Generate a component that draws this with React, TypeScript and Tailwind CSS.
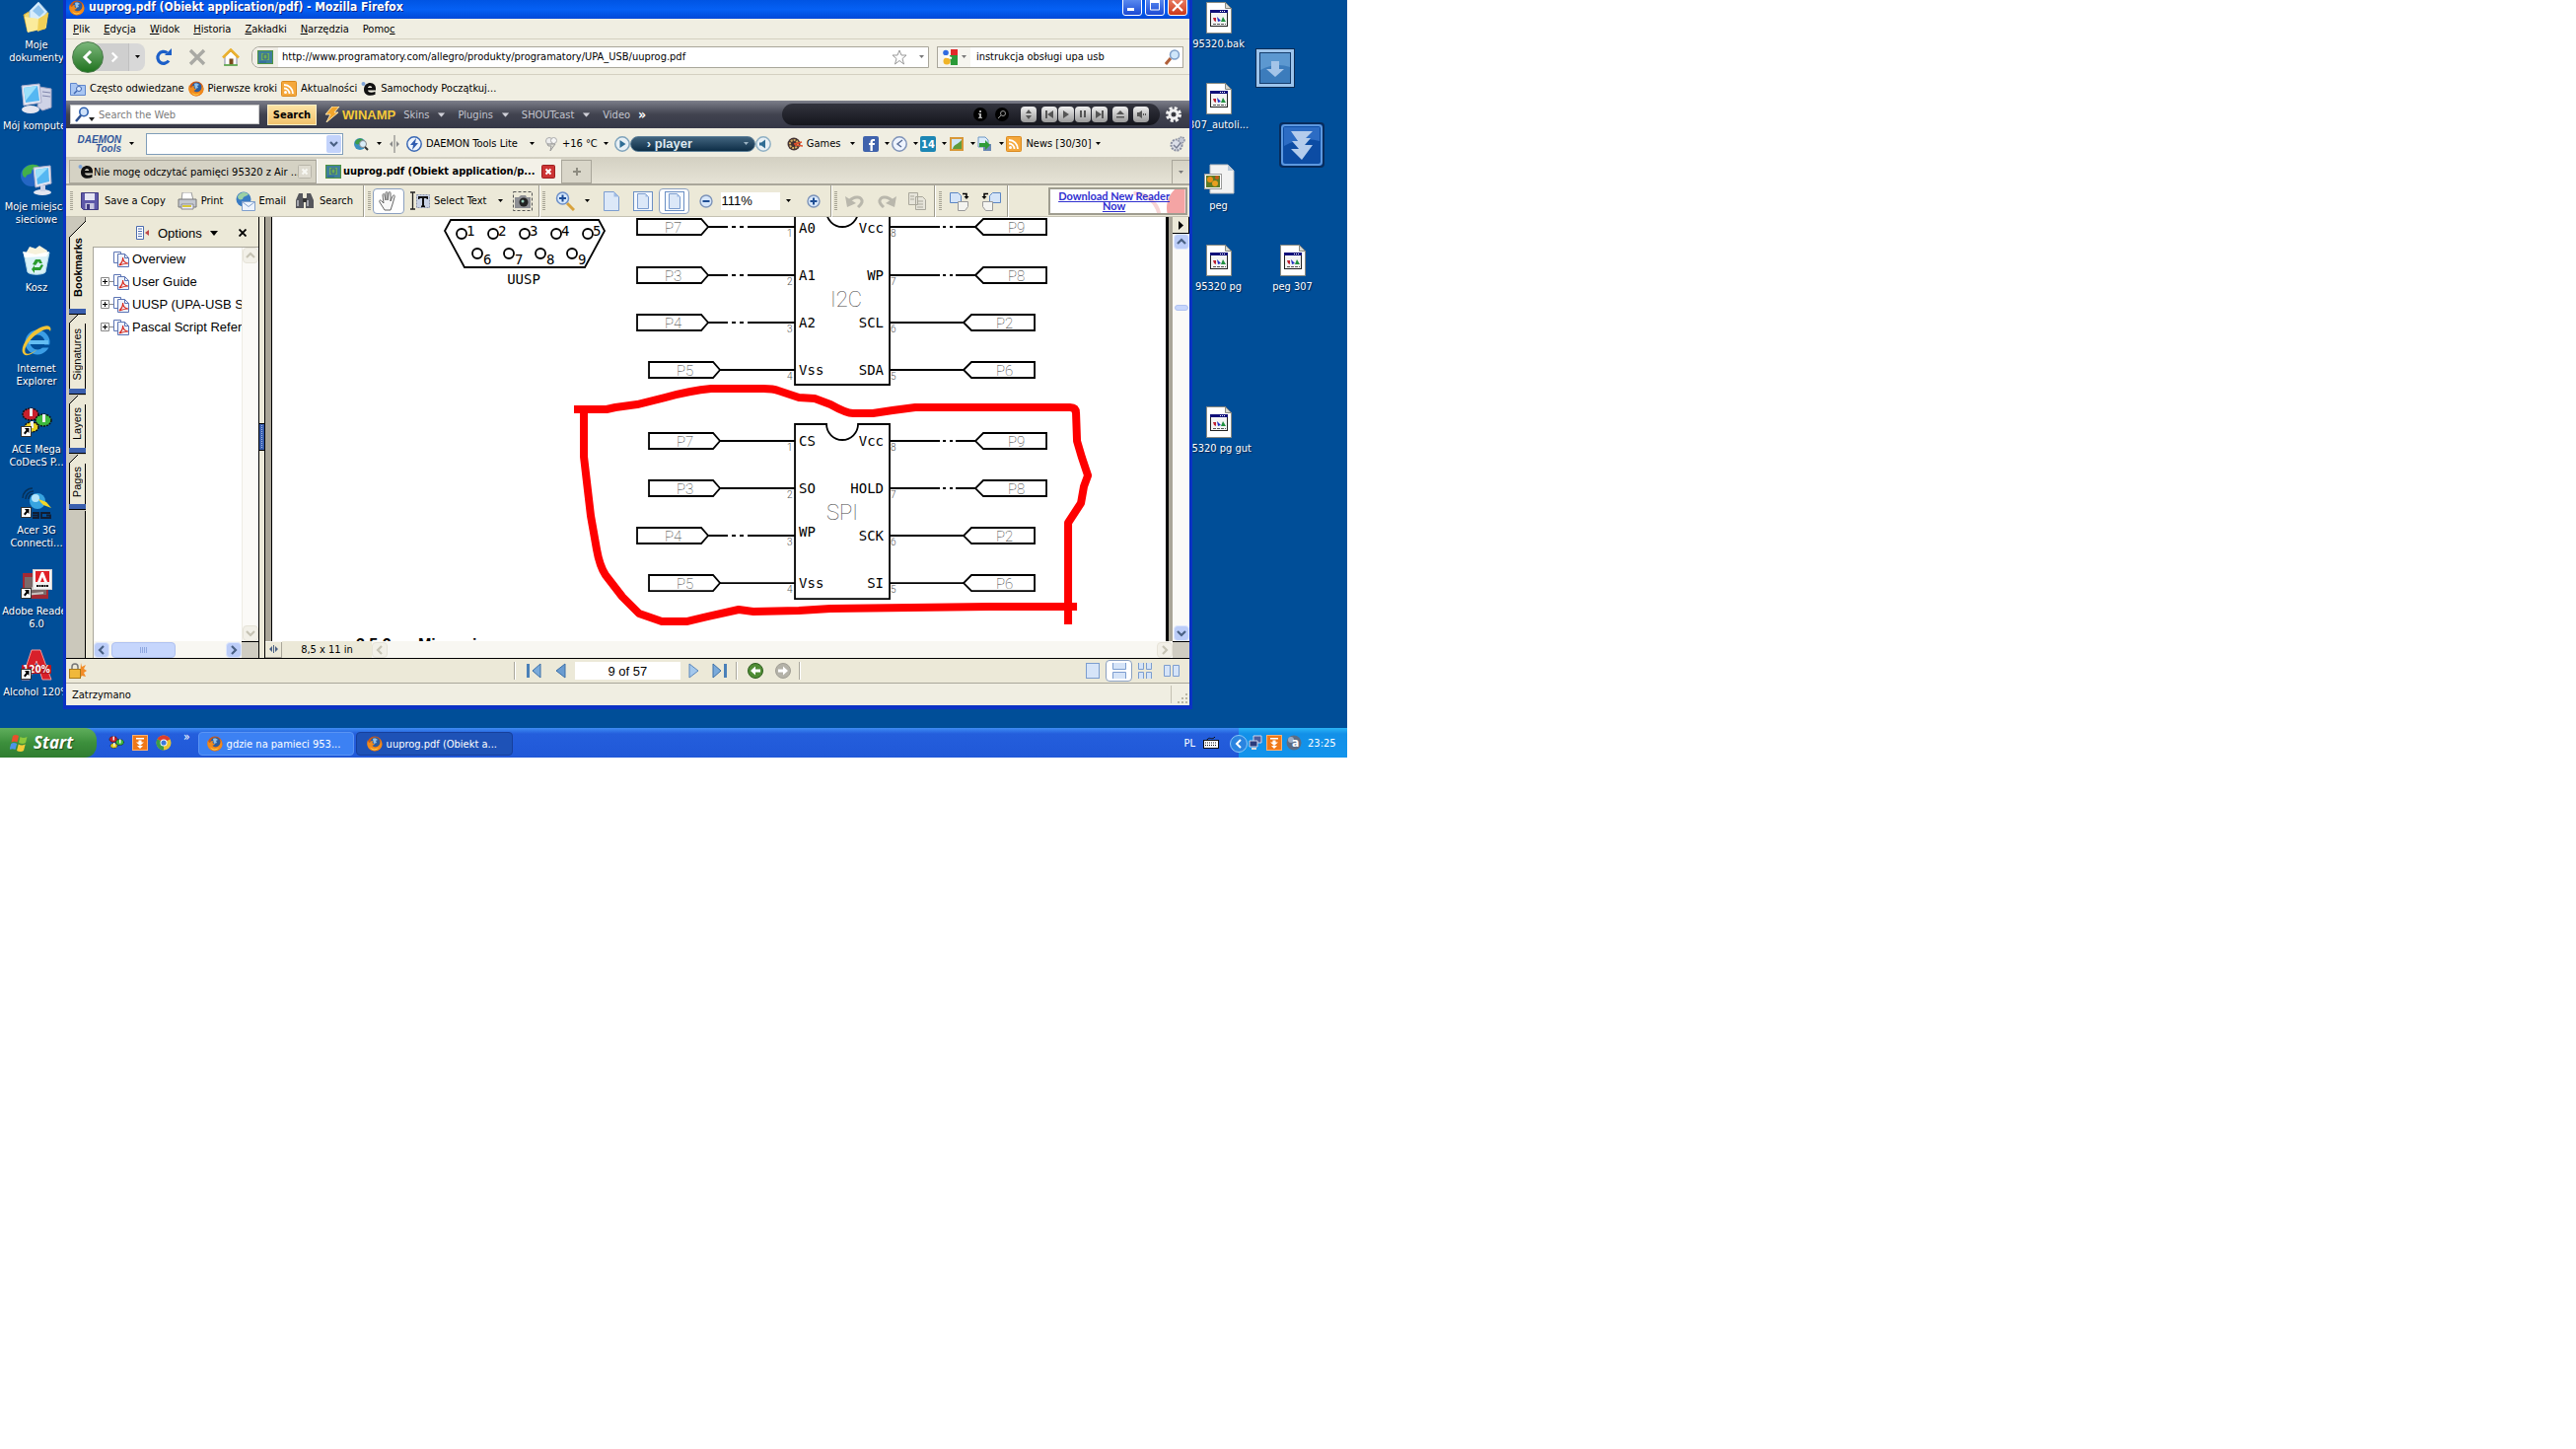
import { useState, type ReactNode } from "react";

type Pin = { tag: string; label: string; y: number; short: boolean; base: number };

const i2cLeft: Pin[] = [
  { tag: "P7", label: "A0", y: 230, short: false, base: 236 },
  { tag: "P3", label: "A1", y: 279, short: false, base: 284 },
  { tag: "P4", label: "A2", y: 327, short: false, base: 332 },
  { tag: "P5", label: "Vss", y: 375, short: true, base: 380 },
];

const i2cRight: Pin[] = [
  { tag: "P9", label: "Vcc", y: 230, short: false, base: 236 },
  { tag: "P8", label: "WP", y: 279, short: false, base: 284 },
  { tag: "P2", label: "SCL", y: 327, short: true, base: 332 },
  { tag: "P6", label: "SDA", y: 375, short: true, base: 380 },
];

const spiLeft: Pin[] = [
  { tag: "P7", label: "CS", y: 447, short: true, base: 452 },
  { tag: "P3", label: "SO", y: 495, short: true, base: 500 },
  { tag: "P4", label: "WP", y: 543, short: false, base: 544 },
  { tag: "P5", label: "Vss", y: 591, short: true, base: 596 },
];

const spiRight: Pin[] = [
  { tag: "P9", label: "Vcc", y: 447, short: false, base: 452 },
  { tag: "P8", label: "HOLD", y: 495, short: false, base: 500 },
  { tag: "P2", label: "SCK", y: 543, short: true, base: 548 },
  { tag: "P6", label: "SI", y: 591, short: true, base: 596 },
];

// ---------- small shared pieces ----------

function Caret({ className = "text-black" }: { className?: string }) {
  return (
    <svg viewBox="0 0 5 3" className={`w-[5px] h-[3px] shrink-0 ${className}`}>
      <path d="M0 0h5L2.5 3z" fill="currentColor" />
    </svg>
  );
}

function Firefox() {
  return (
    <svg viewBox="0 0 16 16" className="w-4 h-4 shrink-0">
      <circle cx="8" cy="8" r="7.5" fill="#d4570f" />
      <circle cx="8.5" cy="6.5" r="5" fill="#2b5c9e" />
      <path d="M6 3c2-1 4 0 5 1l-2 1 1 2-3 1z" fill="#8fc0ea" />
      <path d="M1 4c0 2 1 3 2 3 1-2 2-2 3-2-1 2 0 3 2 3-1 2-3 2-3 1 1 3 5 3 7 1 2-2 2-5 1-7 2 2 3 5 2 8-2 4-6 5-9 4C1 14-1 9 1 4z" fill="#f08a1c" />
      <path d="M3 11c2 3 6 3 9 1-2 3-7 4-9-1z" fill="#ffd04a" />
    </svg>
  );
}

function Rss() {
  return (
    <svg viewBox="0 0 16 16" className="w-4 h-4 shrink-0">
      <rect x="0.5" y="0.5" width="15" height="15" rx="1" fill="#f5a83c" stroke="#d98a20" />
      <circle cx="4.5" cy="11.5" r="1.5" fill="#fff" />
      <path d="M3 7.5a5.5 5.5 0 0 1 5.5 5.5M3 4a9 9 0 0 1 9 9" fill="none" stroke="#fff" strokeWidth="1.8" />
    </svg>
  );
}

function EIcon() {
  return (
    <svg viewBox="0 0 16 16" className="w-4 h-4 shrink-0">
      <path
        fillRule="evenodd"
        d="M15 9.500H7c.3 2.500 4 2.800 7.500 1.200v3C9.500 16 3 15 3 8.800 3 4 6.500 2 9.200 2c4 0 6.300 2.800 5.800 7.500zM7 7h4.200c0-2.400-3.900-2.400-4.200 0z"
        fill="#111"
      />
      <circle cx="2.5" cy="3" r="2" fill="#7fa4d8" />
    </svg>
  );
}

function PcbIcon() {
  return (
    <svg viewBox="0 0 16 14" className="w-4 h-3.5 shrink-0">
      <rect width="16" height="14" fill="#4f9440" />
      <rect x="1" y="1" width="14" height="12" fill="#3f7f9c" />
      <rect x="4" y="3" width="8" height="7" fill="#6fae55" />
      <path d="M6 4h4v5H6zM2 12h7" fill="none" stroke="#2f5f9c" />
    </svg>
  );
}

function OrangeIcon() {
  return (
    <svg viewBox="0 0 16 16" className="w-4 h-4 shrink-0">
      <rect x="0.5" y="0.5" width="15" height="15" fill="#f07818" stroke="#ffb070" />
      <path d="M4 3h8v1.500H4zM6.500 5.500h3v2H12L8 11 4 7.500h2.500zM5 11h6l-3 3z" fill="#fff" />
    </svg>
  );
}

function Gears() {
  return (
    <>
      <g stroke="#111" strokeWidth="1.5" strokeDasharray="2 1">
        <ellipse cx="10" cy="8" rx="8" ry="6" fill="#c8202c" />
        <ellipse cx="23" cy="14" rx="8" ry="6" fill="#3cb83c" />
        <ellipse cx="11" cy="21" rx="7" ry="5" fill="#e8d020" />
      </g>
      <path d="M9 2h3v8H9zM22 8h3v8h-3zM10 15h3v7h-3z" fill="#eee" />
    </>
  );
}

function Grip() {
  return (
    <svg viewBox="0 0 3 20" className="w-[3px] h-5 shrink-0 text-[#a5a293]">
      <path d="M1.5 0v20" stroke="currentColor" strokeWidth="3" strokeDasharray="1 1" />
    </svg>
  );
}

function Divider() {
  return <span className="h-8 w-0.5 shrink-0 border-l border-[#9d9a8c] bg-white" />;
}

function ScrollButton({ d, label, off = false }: { d: string; label: string; off?: boolean }) {
  return (
    <button
      aria-label={label}
      className={`w-4 h-4 shrink-0 flex items-center justify-center rounded-sm border ${
        off ? "border-[#e6e3d8] bg-[#f2f0e8] text-[#c6c3b4]" : "border-[#dfe8fd] bg-[#bccdf8] text-[#4a6184]"
      }`}
    >
      <svg viewBox="0 0 10 10" className="w-2.5 h-2.5">
        <path d={d} fill="none" stroke="currentColor" strokeWidth="2.2" />
      </svg>
    </button>
  );
}

const UP = "M1 7l4-4 4 4";
const DOWN = "M1 3l4 4 4-4";
const LEFT = "M7 1L3 5l4 4";
const RIGHT = "M3 1l4 4-4 4";

// ---------- desktop icons ----------

function ShortcutArrow() {
  return (
    <g>
      <rect x="0.5" y="20.5" width="10" height="10" fill="#fff" stroke="#333" />
      <path d="M8.500 22v5L7 25.500 4.500 28.500 3 27l2.500-3L4 22z" fill="#000" />
    </g>
  );
}

function FileIcon() {
  return (
    <svg viewBox="0 0 26 32" className="w-[26px] h-8">
      <path d="M0.5 0.500h19l6 6v25h-25z" fill="#fff" stroke="#8a8a80" />
      <path d="M19.5 0.500v6h6z" fill="#d8d8d0" stroke="#8a8a80" />
      <rect x="4.5" y="8.500" width="17" height="16" fill="#f4f4f4" stroke="#222" />
      <path d="M4 8h18v3H4z" fill="#10107a" />
      <path d="M14 9.500h6" stroke="#fff" strokeDasharray="1 1" />
      <path d="M7 16h3v4l-2-1z" fill="#c02030" />
      <path d="M11 15l4 4-3 1z" fill="#2030c0" />
      <path d="M15 20l2-5 3 5z" fill="#209040" />
      <path d="M7 22.500h13" stroke="#555" strokeDasharray="3 1" />
    </svg>
  );
}

function ImageFileIcon() {
  return (
    <svg viewBox="0 0 32 32" className="w-8 h-8">
      <path d="M7 1h18l6 6v23H7z" fill="#f2f2f2" stroke="#c0c0c0" />
      <path d="M25 1v6h6z" fill="#b9c8d8" />
      <rect x="1.5" y="10.500" width="17" height="15" fill="#fff" stroke="#999" />
      <rect x="3" y="12" width="14" height="12" fill="#5c7a28" />
      <circle cx="7" cy="16" r="3" fill="#e89018" />
      <circle cx="12" cy="20" r="3" fill="#e8a020" />
      <circle cx="14" cy="14" r="2" fill="#c85a18" />
    </svg>
  );
}

const leftIcons: { lines: string[]; icon: ReactNode }[] = [
  {
    lines: ["Moje", "dokumenty"],
    icon: (
      <>
        <path d="M3 13l5-3 3 1 5-2 12 2-3 16-18 3z" fill="#f3d86a" stroke="#c9a53a" />
        <path d="M9 9l9-9 9 10-7 9-11 3z" fill="#d7ecfb" stroke="#9cc4e2" />
        <path d="M12 9l6-6 6 7-5 5z" fill="#8fc3ee" />
        <path d="M4 15l14 2 9-5-1 14-19 5z" fill="#fbeb9c" />
        <path d="M18 17l10-6-3 16-8 3z" fill="#f0d058" />
      </>
    ),
  },
  {
    lines: ["Mój komputer"],
    icon: (
      <>
        <path d="M19 4l12 2v19l-9 3-5-4z" fill="#cfd3e6" stroke="#9a9fc0" />
        <path d="M22 9l8 1M22 13l8 1" stroke="#8086ac" />
        <ellipse cx="10" cy="27" rx="9" ry="4" fill="#e4e6f0" />
        <path d="M1 3l18-2 2 19-18 3z" fill="#e4e6f2" stroke="#a9aecb" />
        <path d="M3 5l14-2 2 15-14 2z" fill="#55b7f2" />
        <path d="M3 5l14-2-12 15z" fill="#9be0fb" />
      </>
    ),
  },
  {
    lines: ["Moje miejsca", "sieciowe"],
    icon: (
      <>
        <circle cx="11" cy="12" r="11" fill="#2466c4" />
        <path d="M2 7c4-7 13-8 17-4-3 3-8 1-8 5s-5 1-6 6c-3 0-4-4-3-7z" fill="#43b04a" />
        <ellipse cx="22" cy="29" rx="9" ry="3" fill="#e4e6f0" />
        <path d="M13 4l17-2 1 18-16 4z" fill="#e4e6f2" stroke="#a9aecb" />
        <path d="M15 6l13-2 1 14-12 3z" fill="#55b7f2" />
        <path d="M15 6l13-2-12 12z" fill="#9be0fb" />
        <path d="M20 22h5v6h-5z" fill="#cfd3e6" />
      </>
    ),
  },
  {
    lines: ["Kosz"],
    icon: (
      <>
        <path d="M3 8h26l-4 20c-3 3-15 3-18 0z" fill="#d9f1f7" stroke="#b5dbe8" />
        <path d="M5 9l4-7 6 2 4-3 8 5-1 5H6z" fill="#f7f2dc" />
        <path d="M2 7l13 3 14-3-3 5-22 1z" fill="#fff" />
        <path d="M12 20l3-5h5l2 4h-3l-1-2-3 4zM14 26h6l3-5-2-1-2 3h-5v-2l-3 4 3 4z" fill="#2a9c2f" />
      </>
    ),
  },
  {
    lines: ["Internet", "Explorer"],
    icon: (
      <>
        <circle cx="17" cy="17" r="10" fill="none" stroke="#3b9ee6" strokeWidth="5" />
        <path d="M8 17h20" stroke="#63bdf3" strokeWidth="4" />
        <path d="M21 19.500h9v3h-8z" fill="#004e98" />
        <path d="M3 29c-5-5 4-20 15-26 9-5 14-3 12 3-1-3-5-3-11 1C9 13 2 24 5 28c3 2 8-1 12-4-5 5-11 8-14 5z" fill="#f2c335" />
      </>
    ),
  },
  {
    lines: ["ACE Mega", "CoDecS P..."],
    icon: (
      <>
        <Gears />
        <ShortcutArrow />
      </>
    ),
  },
  {
    lines: ["Acer 3G", "Connecti..."],
    icon: (
      <>
        <path d="M2 11c0-5 4-10 10-10M5 12c0-4 3-8 8-8M8 12c0-3 2-5 5-5" fill="none" stroke="#063058" strokeWidth="1.5" />
        <circle cx="17" cy="14" r="8" fill="#38a4e0" />
        <circle cx="15" cy="11" r="4" fill="#b4e4fa" />
        <path d="M18 12l8 3 5 6-8-3-3-3z" fill="#f5d828" />
        <path d="M12 26h6v5h-6M12 28.500h6M30 26h-9v5h9v-2.500h-4" fill="none" stroke="#111d33" strokeWidth="1.800" />
        <ShortcutArrow />
      </>
    ),
  },
  {
    lines: ["Adobe Reader", "6.0"],
    icon: (
      <>
        <rect x="2" y="5" width="26" height="26" fill="#a32a34" />
        <rect x="4" y="9" width="22" height="18" fill="#7b6a6a" />
        <path d="M4 25c8 0 10-12 20-14M5 27l18-2" stroke="#c9c2c0" strokeWidth="2" fill="none" />
        <rect x="12.5" y="1.500" width="19" height="20" fill="#f2f2f2" stroke="#cfcfcf" />
        <rect x="15" y="3" width="14" height="11" fill="#e02028" />
        <path d="M17 14l4-10h2l4 10h-3l-2-5-2 5z" fill="#fff" />
        <path d="M16 18h12" stroke="#111" strokeWidth="2" strokeDasharray="2 0.5" />
        <ShortcutArrow />
      </>
    ),
  },
  {
    lines: ["Alcohol 120%"],
    icon: (
      <>
        <path d="M11 1h9l11 30h-9L16 12 9 31H1z" fill="#d8202a" stroke="#f29a9a" />
        <rect x="1" y="16" width="30" height="9" rx="1" fill="#b81820" />
        <text x="2" y="24" className="text-[10px] font-bold fill-white">
          120%
        </text>
        <ShortcutArrow />
      </>
    ),
  },
];

const files = [
  { name: "95320.bak", place: "col-start-1 row-start-1" },
  { name: "307_autoli...", place: "col-start-1 row-start-2" },
  { name: "peg", place: "col-start-1 row-start-3", image: true },
  { name: "95320 pg", place: "col-start-1 row-start-4" },
  { name: "peg 307", place: "col-start-2 row-start-4" },
  { name: "95320 pg gut", place: "col-start-1 row-start-6" },
];

function DesktopLabel({ children }: { children: ReactNode }) {
  return (
    <span className="block text-center whitespace-nowrap text-white leading-[13px] [text-shadow:1px_1px_1px_#001f4a]">
      {children}
    </span>
  );
}

// ---------- browser bars ----------

function TitleBar() {
  const button =
    "w-5 h-[21px] flex items-center justify-center rounded-[3px] border border-white bg-gradient-to-b from-[#6a98f5] to-[#1c48d4]";
  return (
    <header className="h-[19px] flex items-end bg-gradient-to-b from-[#0054e3] via-[#0560f4] to-[#0048d8] pl-[3px] pr-0.5 pb-[3px]">
      <Firefox />
      <h1 className="ml-1 flex-1 font-bold text-xs leading-[18px] text-white whitespace-nowrap [text-shadow:1px_1px_0_#0a1f82]">
        uuprog.pdf (Obiekt application/pdf) - Mozilla Firefox
      </h1>
      <div className="flex gap-[3px]">
        <button aria-label="Minimalizuj" className={button}>
          <svg viewBox="0 0 18 19" className="w-[18px] h-[19px]">
            <path d="M4 12h7v3H4z" fill="#fff" />
          </svg>
        </button>
        <button aria-label="Maksymalizuj" className={button}>
          <svg viewBox="0 0 18 19" className="w-[18px] h-[19px]">
            <path d="M4.5 5h9v9h-9z" fill="none" stroke="#fff" />
            <path d="M4 4h10v3H4z" fill="#fff" />
          </svg>
        </button>
        <button
          aria-label="Zamknij"
          className="w-5 h-[21px] flex items-center justify-center rounded-[3px] border border-white bg-gradient-to-b from-[#ee8a70] to-[#cc3614]"
        >
          <svg viewBox="0 0 18 19" className="w-[18px] h-[19px]">
            <path d="M4 5l10 10M14 5L4 15" stroke="#fff" strokeWidth="2.2" />
          </svg>
        </button>
      </div>
    </header>
  );
}

function MenuBar() {
  const items: [string, string, string][] = [
    ["", "P", "lik"],
    ["", "E", "dycja"],
    ["", "W", "idok"],
    ["", "H", "istoria"],
    ["", "Z", "akładki"],
    ["", "N", "arzędzia"],
    ["Pomo", "c", ""],
  ];
  return (
    <nav className="h-[21px] flex items-center gap-3.5 pl-[7px] border-b border-[#d4d0c0]">
      {items.map(([before, key, after]) => (
        <button key={before + key + after}>
          {before}
          <u>{key}</u>
          {after}
        </button>
      ))}
    </nav>
  );
}

function NavBar() {
  const [url, setUrl] = useState("http://www.programatory.com/allegro/produkty/programatory/UPA_USB/uuprog.pdf");
  const [query, setQuery] = useState("instrukcja obsługi upa usb");
  return (
    <div className="h-9 flex items-center px-1.5 border-b border-[#d4d0c0]">
      <div className="flex items-center">
        <button
          aria-label="Wstecz"
          className="w-8 h-8 z-10 rounded-full border border-[#4c7a4c] bg-gradient-to-b from-[#7bb77b] to-[#1c731c] flex items-center justify-center"
        >
          <svg viewBox="0 0 16 16" className="w-4 h-4">
            <path d="M11 2L5 8l6 6" fill="none" stroke="#fff" strokeWidth="3" />
          </svg>
        </button>
        <button
          aria-label="Dalej"
          className="-ml-3 w-[38px] h-7 pl-2 bg-[#cfcfcf] flex items-center justify-center border-r border-[#c0c0c0]"
        >
          <svg viewBox="0 0 16 16" className="w-3 h-3">
            <path d="M5 2l6 6-6 6" fill="none" stroke="#fff" strokeWidth="3" />
          </svg>
        </button>
        <button aria-label="Historia" className="w-4 h-7 rounded-r-lg bg-[#d8d8d8] flex items-center justify-center">
          <Caret />
        </button>
      </div>
      <button aria-label="Odśwież" className="ml-2.5">
        <svg viewBox="0 0 18 18" className="w-[18px] h-[18px]">
          <path d="M14 12.500A6 6 0 1 1 12.500 4.500" fill="none" stroke="#1c5fc8" strokeWidth="3.2" />
          <path d="M10 7h7V0z" fill="#1c5fc8" />
        </svg>
      </button>
      <button aria-label="Zatrzymaj" className="ml-4">
        <svg viewBox="0 0 18 18" className="w-[18px] h-[18px]">
          <path d="M2 2l14 14M16 2L2 16" stroke="#a9a9a4" strokeWidth="3.4" />
        </svg>
      </button>
      <button aria-label="Strona startowa" className="ml-4">
        <svg viewBox="0 0 18 18" className="w-[18px] h-[18px]">
          <path d="M3 8v9h12V8L9 3z" fill="#fff" stroke="#8888aa" />
          <path d="M1 9.500L9 1.500l8 8" fill="none" stroke="#eab02c" strokeWidth="2.6" />
          <rect x="7.5" y="10.500" width="4" height="6" fill="#7a4a1c" />
          <path d="M2 17h14" stroke="#54a83c" strokeWidth="1.5" />
        </svg>
      </button>
      <div className="ml-3 h-[22px] flex-[69] min-w-0 flex items-center border border-[#a9a69a] rounded-l-lg bg-white">
        <span className="w-[26px] h-full flex items-center justify-center rounded-l-lg bg-[#f0eee6]">
          <PcbIcon />
        </span>
        <input
          aria-label="Adres"
          value={url}
          onChange={(e) => setUrl(e.target.value)}
          className="flex-1 min-w-0 ml-1 outline-none"
        />
        <svg viewBox="0 0 16 16" className="w-4 h-4 mr-3">
          <path d="M8 1l2 5h5l-4 3.500L12.500 15 8 11.500 3.500 15 5 9.500 1 6h5z" fill="#fff" stroke="#999" />
        </svg>
        <Caret className="text-[#777] mr-1" />
      </div>
      <div className="ml-2 h-[22px] flex-[25] min-w-0 flex items-center border border-[#a9a69a] bg-white">
        <span className="w-[33px] h-full flex items-center gap-1 pl-1 bg-[#f6f5ef]">
          <svg viewBox="0 0 16 16" className="w-4 h-4">
            <circle cx="4" cy="3.500" r="2.8" fill="#2f6be0" />
            <path d="M9 0h7v7H9z" fill="#e02828" />
            <path d="M8 6h8v10H9z" fill="#2a9a38" />
            <circle cx="5" cy="12" r="3.500" fill="#f0b428" />
            <path d="M3 7l7 2" stroke="#fff" strokeWidth="2" />
          </svg>
          <Caret className="text-[#777]" />
        </span>
        <input
          aria-label="Google"
          value={query}
          onChange={(e) => setQuery(e.target.value)}
          className="flex-1 min-w-0 ml-1.5 outline-none"
        />
        <svg viewBox="0 0 16 16" className="w-4 h-4 mr-0.5">
          <path d="M1 15l5-6" stroke="#b0603a" strokeWidth="3" />
          <circle cx="10" cy="5.500" r="4.500" fill="#cfe6fa" stroke="#7f9fc8" strokeWidth="1.5" />
        </svg>
      </div>
    </div>
  );
}

function BookmarksBar() {
  return (
    <div className="h-[26px] flex items-center gap-1 pl-1 pt-px whitespace-nowrap">
      <a href="#czesto" className="flex items-center gap-1">
        <svg viewBox="0 0 16 14" className="w-4 h-3.5">
          <path d="M0.5 1.500h6l1 2h8v10h-15z" fill="#a9c6f2" stroke="#5f86cc" />
          <circle cx="9" cy="7" r="2.500" fill="#dcebff" stroke="#3d64b0" />
          <path d="M7 9l-3 3" stroke="#3d64b0" strokeWidth="1.5" />
        </svg>
        Często odwiedzane
      </a>
      <a href="#pierwsze" className="flex items-center gap-1">
        <Firefox />
        Pierwsze kroki
      </a>
      <a href="#aktualnosci" className="flex items-center gap-1">
        <Rss />
        Aktualności
      </a>
      <a href="#samochody" className="flex items-center gap-1">
        <EIcon />
        Samochody Początkuj...
      </a>
    </div>
  );
}

function WinampBar() {
  const controls = [
    { label: "Rozmiar", d: "M8 3l3 4H5zM8 13l3-4H5z", gap: "" },
    { label: "Poprzedni", d: "M4 4h2v8H4zM12 4v8L6 8z", gap: "ml-1" },
    { label: "Odtwarzaj", d: "M5 4l6 4-6 4z", gap: "" },
    { label: "Pauza", d: "M5 4h2v7H5zM9 4h2v7H9z", gap: "" },
    { label: "Następny", d: "M4 4l6 4-6 4zM10 4h2v8h-2z", gap: "" },
    { label: "Wysuń", d: "M8 4l4 4H4zM4 10h8v1.500H4z", gap: "ml-1" },
    { label: "Głośność", d: "M4 6h2l3-2v8L6 10H4zM10 7h1v2h-1zM12 7h1v2h-1z", gap: "ml-1" },
  ];
  return (
    <div className="h-7 flex items-center pl-1 pr-2 bg-gradient-to-b from-[#7d7f8a] via-[#41434f] to-[#363847] text-[#c4c6d0]">
      <label className="w-48 h-5 shrink-0 flex items-center bg-white border border-[#c8c8c8] pl-1">
        <svg viewBox="0 0 20 16" className="w-5 h-4">
          <circle cx="9" cy="5.500" r="4.200" fill="#cfe2fa" stroke="#2c5fae" strokeWidth="1.6" />
          <path d="M6 9l-5 6" stroke="#2c4f8e" strokeWidth="2.5" />
          <path d="M14 11h6l-3 4z" fill="#222" />
        </svg>
        <input
          aria-label="Szukaj w sieci"
          placeholder="Search the Web"
          className="ml-1 flex-1 min-w-0 text-black outline-none placeholder:text-[#7b7b7b]"
        />
      </label>
      <button className="ml-2 w-[50px] h-[21px] shrink-0 border border-[#fff0c8] bg-gradient-to-b from-[#fbe3a4] to-[#f1c26c] font-bold text-black">
        Search
      </button>
      <span className="ml-2 shrink-0 flex items-center gap-0.5 font-black text-[#f4c93a] text-[13px] font-['Liberation_Sans',sans-serif]">
        <svg viewBox="0 0 16 16" className="w-4 h-4">
          <path d="M8 0h7L10 6h4L2 16l4-8H1z" fill="#f1a52c" stroke="#fbe6b0" />
        </svg>
        WINAMP
      </span>
      <button className="ml-2 flex items-center gap-2.5">
        Skins <Caret className="text-[#d0d0d8] scale-150" />
      </button>
      <button className="ml-3.5 flex items-center gap-2.5">
        Plugins <Caret className="text-[#d0d0d8] scale-150" />
      </button>
      <button className="ml-3.5 flex items-center gap-2.5">
        SHOUTcast <Caret className="text-[#d0d0d8] scale-150" />
      </button>
      <button className="ml-3.5">Video</button>
      <button className="ml-2 font-bold text-white text-sm">»</button>
      <div className="ml-auto w-[383px] h-[22px] shrink-0 flex items-center justify-end pr-2.5 rounded-full bg-gradient-to-b from-[#33343e] to-[#15161d]">
        <button aria-label="Informacje" className="w-3.5 h-3.5 rounded-full bg-black flex items-center justify-center">
          <svg viewBox="0 0 14 14" className="w-3.5 h-3.5">
            <path d="M6 3h2v2H6zM5 6h3v4h1v1H5v-1h1V7H5z" fill="#aaa" />
          </svg>
        </button>
        <button aria-label="Szukaj" className="ml-2 mr-3 w-3.5 h-3.5 rounded-full bg-black flex items-center justify-center">
          <svg viewBox="0 0 14 14" className="w-3.5 h-3.5">
            <circle cx="8" cy="6" r="2.500" fill="none" stroke="#999" />
            <path d="M6 8l-3 3" stroke="#999" />
          </svg>
        </button>
        {controls.map((c) => (
          <button
            key={c.label}
            aria-label={c.label}
            className={`w-4 h-4 mr-px rounded-sm bg-gradient-to-b from-[#f0f0f0] to-[#9a9a9a] ${c.gap}`}
          >
            <svg viewBox="0 0 16 16" className="w-4 h-4">
              <path d={c.d} fill="#555" />
            </svg>
          </button>
        ))}
      </div>
      <button aria-label="Ustawienia" className="ml-1.5">
        <svg viewBox="0 0 16 16" className="w-4 h-4">
          <circle cx="8" cy="8" r="6.500" fill="none" stroke="#f0f0f0" strokeWidth="3" strokeDasharray="3 2.1" />
          <circle cx="8" cy="8" r="4" fill="none" stroke="#f0f0f0" strokeWidth="3" />
          <circle cx="8" cy="8" r="1.500" fill="#333" />
        </svg>
      </button>
    </div>
  );
}

function DaemonBar() {
  return (
    <div className="h-[29px] flex items-center pl-[11px] pr-1 pt-0.5 whitespace-nowrap">
      <span className="w-[45px] shrink-0 text-right italic text-[#33589c] text-[10px] leading-[9px] font-bold font-['Liberation_Sans',sans-serif]">
        DAEMON
        <br />
        Tools
      </span>
      <span className="ml-2 mr-3">
        <Caret />
      </span>
      <div className="relative w-[200px] h-[22px] shrink-0">
        <select aria-label="DAEMON Tools" className="w-full h-full appearance-none border border-[#7f9db9] bg-white" />
        <svg viewBox="0 0 15 18" className="absolute right-0.5 top-0.5 w-[15px] h-[18px] pointer-events-none">
          <rect width="15" height="18" rx="2" fill="#c3d3fb" />
          <path d="M4 7l3.500 3.500L11 7" fill="none" stroke="#4a6184" strokeWidth="2.2" />
        </svg>
      </div>
      <button aria-label="Szukaj" className="ml-2.5 flex items-center gap-2">
        <svg viewBox="0 0 16 16" className="w-4 h-4">
          <circle cx="7" cy="8" r="6" fill="#3c8fc0" />
          <path d="M2 6c2-4 6-4 8-3-1 2-3 2-4 5-2 1-4 0-4-2z" fill="#3c9c48" />
          <circle cx="10" cy="8" r="3.500" fill="#d8ecf8" stroke="#888" />
          <path d="M12 11l3 3" stroke="#333" strokeWidth="2" />
        </svg>
        <Caret />
      </button>
      <svg viewBox="0 0 10 18" className="ml-2 w-2.5 h-[18px] shrink-0">
        <path d="M5 0v18" stroke="#777" />
        <path d="M3 6L0 9l3 3zM7 6l3 3-3 3z" fill="#888" />
      </svg>
      <button className="ml-[7px] flex items-center">
        <svg viewBox="0 0 16 16" className="w-4 h-4">
          <circle cx="8" cy="8" r="7.200" fill="#eef4fc" stroke="#3a68b4" strokeWidth="1.5" />
          <path d="M10 2L4 9h3l-1 5 6-7H9z" fill="#2f5cb0" />
        </svg>
        <span className="ml-1 mr-3">DAEMON Tools Lite</span>
        <Caret />
      </button>
      <button className="ml-2.5 flex items-center">
        <svg viewBox="0 0 14 16" className="w-3.5 h-4">
          <circle cx="5" cy="5" r="3.500" fill="#eee" stroke="#aaa" />
          <circle cx="9.5" cy="4.500" r="3" fill="#f6f6f6" stroke="#aaa" />
          <path d="M3 8h8l-5 7 1-5H4z" fill="#dcdcd4" stroke="#999" />
        </svg>
        <span className="ml-1 mr-1.5">+16 °C</span>
        <Caret />
      </button>
      <button aria-label="Odtwarzaj" className="ml-1.5 shrink-0">
        <svg viewBox="0 0 16 16" className="w-4 h-4">
          <circle cx="8" cy="8" r="7.200" fill="#e8f0f5" stroke="#7fa3bb" strokeWidth="1.5" />
          <path d="M5.5 4l6 4-6 4z" fill="#2f6d95" />
        </svg>
      </button>
      <button className="w-[127px] h-4 shrink-0 pl-4 pr-1.5 flex items-center justify-between rounded-full border border-[#5d7f98] bg-gradient-to-b from-[#42657f] to-[#0d2e47] text-[13px] leading-3 font-['Liberation_Sans',sans-serif] text-[#dce8f0] font-bold">
        <span>› player</span>
        <Caret className="text-[#9db4c4]" />
      </button>
      <button aria-label="Dźwięk" className="shrink-0">
        <svg viewBox="0 0 16 16" className="w-4 h-4">
          <circle cx="8" cy="8" r="7.200" fill="#e8f0f5" stroke="#8fb0c4" strokeWidth="1.5" />
          <path d="M4 6.500h2l4-3v9l-4-3H4z" fill="#2f6d95" />
        </svg>
      </button>
      <button className="ml-4 flex items-center">
        <svg viewBox="0 0 16 16" className="w-4 h-4">
          <circle cx="7" cy="8" r="6.500" fill="#443333" />
          <circle cx="7" cy="8" r="4" fill="none" stroke="#d8b060" strokeWidth="2" strokeDasharray="2 1" />
          <path d="M7 8l8-2M8 9l8 1" stroke="#e0502c" strokeWidth="1.5" />
        </svg>
        <span className="ml-1 mr-2.5">Games</span>
        <Caret />
      </button>
      <div className="ml-2 flex items-center gap-0.5">
        <button aria-label="Facebook" className="flex items-center gap-1.5">
          <svg viewBox="0 0 16 16" className="w-4 h-4">
            <rect width="16" height="16" rx="2" fill="#3f62ac" />
            <path d="M12 3h-1.500C8 3 7.500 4.500 7.500 6v1H6v2h1.500v6h2.300V9h2l.3-2H9.800V6c0-.8.3-1 1-1H12z" fill="#fff" />
          </svg>
          <Caret />
        </button>
        <button aria-label="Zegar" className="flex items-center gap-1.5">
          <svg viewBox="0 0 16 16" className="w-4 h-4">
            <circle cx="8" cy="8" r="7.200" fill="#eef4ff" stroke="#7f93b8" strokeWidth="1.5" />
            <path d="M11 4L6 8l4 3" fill="none" stroke="#5b6f98" strokeWidth="1.5" />
          </svg>
          <Caret />
        </button>
        <button aria-label="Kalendarz" className="flex items-center gap-1.5">
          <svg viewBox="0 0 16 16" className="w-4 h-4">
            <rect width="16" height="16" rx="2" fill="#1c86b4" />
            <text x="1" y="12" className="text-[11px] font-bold fill-white">
              14
            </text>
          </svg>
          <Caret />
        </button>
        <button aria-label="Galeria" className="flex items-center gap-1.5">
          <svg viewBox="0 0 16 16" className="w-4 h-4">
            <rect x="2" y="2" width="12" height="12" fill="#cfe6f6" stroke="#d89838" strokeWidth="2" />
            <path d="M4 13c1-5 5-4 9-9v9z" fill="#5f9c3c" />
          </svg>
          <Caret />
        </button>
        <button aria-label="Poczta" className="flex items-center gap-1.5">
          <svg viewBox="0 0 16 16" className="w-4 h-4">
            <path d="M1 1h7l3 3v7H1z" fill="#dcecfa" stroke="#6f98c4" />
            <path d="M6 8h8v7H6z" fill="#6a88b4" />
            <path d="M2 7h6V4l5 5-5 5v-3H2z" fill="#2f9c38" />
          </svg>
          <Caret />
        </button>
        <button className="flex items-center">
          <Rss />
          <span className="mx-1">News [30/30]</span>
          <Caret />
        </button>
      </div>
      <button aria-label="Opcje paska" className="ml-auto">
        <svg viewBox="0 0 16 16" className="w-4 h-4">
          <circle cx="7" cy="9" r="5.500" fill="#dcdfe8" stroke="#888ea0" strokeWidth="2" strokeDasharray="2 1" />
          <circle cx="12" cy="4" r="3" fill="#c4c8d4" stroke="#888ea0" strokeWidth="1.5" strokeDasharray="1.5 1" />
          <path d="M4 9l3 3 4-5" fill="none" stroke="#7a8094" strokeWidth="1.5" />
        </svg>
      </button>
    </div>
  );
}

function TabBar() {
  return (
    <div className="h-[29px] flex items-end pl-[3px] border-b-2 border-[#a9a69a] bg-gradient-to-b from-[#d3d0c2] to-[#e6e3d6] whitespace-nowrap">
      <div className="w-[251px] h-6 flex items-center pl-2 border border-[#a9a69a] bg-[#d5d2c4]">
        <EIcon />
        <button className="flex-1 min-w-0 text-left overflow-hidden">Nie mogę odczytać pamięci 95320 z Air ...</button>
        <button aria-label="Zamknij kartę" className="mr-1">
          <svg viewBox="0 0 14 14" className="w-3.5 h-3.5">
            <rect x="0.5" y="0.500" width="13" height="13" rx="1" fill="#dedbd0" stroke="#b9b6aa" />
            <path d="M4.5 4.500l5 5M9.500 4.500l-5 5" stroke="#f8f8f4" strokeWidth="2" />
          </svg>
        </button>
      </div>
      <div className="w-[248px] h-[25px] flex items-center pl-2 bg-[#f3f1e8] border-l border-white">
        <PcbIcon />
        <button className="ml-0.5 flex-1 min-w-0 text-left font-bold">uuprog.pdf (Obiekt application/p...</button>
        <button aria-label="Zamknij kartę" className="mr-1.5">
          <svg viewBox="0 0 14 14" className="w-3.5 h-3.5">
            <rect x="0.5" y="0.500" width="13" height="13" rx="1" fill="#cc3434" stroke="#9c2020" />
            <path d="M4.5 4.500l5 5M9.500 4.500l-5 5" stroke="#fff" strokeWidth="2" />
          </svg>
        </button>
      </div>
      <button aria-label="Nowa karta" className="w-[31px] h-6 flex items-center justify-center border border-[#a9a69a] bg-[#d9d6c9]">
        <svg viewBox="0 0 8 8" className="w-2 h-2">
          <path d="M3 0h2v3h3v2H5v3H3V5H0V3h3z" fill="#8d8b80" />
        </svg>
      </button>
      <button aria-label="Lista kart" className="ml-auto w-[18px] h-6 flex items-center justify-center border-l border-t border-[#a9a69a]">
        <Caret className="text-[#777]" />
      </button>
    </div>
  );
}

// ---------- reader toolbar ----------

function PageGlyph({ framed = false }: { framed?: boolean }) {
  return (
    <svg viewBox="0 0 20 20" className="w-5 h-5">
      {framed && <rect x="0.5" y="0.500" width="19" height="19" fill="#f4f8fd" stroke="#6b8fc4" />}
      <path d={framed ? "M4.5 2.500h8l3 3v12h-11z" : "M2.5 0.500h10l5 5v14h-15z"} fill="#dce8f8" stroke="#7c9dcf" />
      <path d={framed ? "M12.5 2.500v3h3z" : "M12.5 0.500v5h5z"} fill="#9fbbe4" />
    </svg>
  );
}

function RotateGlyph({ flip = false }: { flip?: boolean }) {
  return (
    <svg viewBox="0 0 20 20" className={`w-5 h-5 ${flip ? "-scale-x-100" : ""}`}>
      <path d="M0.5 1.500h8l3 3v7h-11z" fill="#d4e4f8" stroke="#5b86c4" />
      <path d="M8.5 10.500h10v5l-3 4h-7z" fill="#f4f4f0" stroke="#999" />
      <path d="M13 2.500h4v3" fill="none" stroke="#000" strokeWidth="1.5" />
      <path d="M14.5 5h5L17 8z" fill="#000" />
    </svg>
  );
}

function ZoomCircle({ plus = false }: { plus?: boolean }) {
  return (
    <svg viewBox="0 0 14 14" className="w-3.5 h-3.5">
      <circle cx="7" cy="7" r="6" fill="#d6e6fa" stroke="#7c93b8" strokeWidth="1.4" />
      <path d={plus ? "M3.5 6h2.500V3.500h2V6h2.500v2H8v2.500H6V8H3.500z" : "M3.5 6h7v2h-7z"} fill="#1f4e94" />
    </svg>
  );
}

function ReaderToolbar() {
  const [zoom, setZoom] = useState("111%");
  return (
    <div className="h-8 flex items-center pl-1 pr-0.5 bg-[#ece9d8] border-b border-[#c4c1b2] whitespace-nowrap">
      <Grip />
      <button className="ml-2 flex items-center gap-1.5">
        <svg viewBox="0 0 18 18" className="w-[18px] h-[18px]">
          <path d="M0.5 0.500h17v17h-15l-2-2z" fill="#5d58a8" stroke="#3f3a80" />
          <rect x="4" y="1" width="10" height="7" fill="#e6e6f4" />
          <rect x="4.5" y="11" width="9" height="6" fill="#c9c8e0" />
          <rect x="6" y="12" width="3" height="5" fill="#3f3a80" />
        </svg>
        Save a Copy
      </button>
      <button className="ml-3 flex items-center gap-1">
        <svg viewBox="0 0 20 18" className="w-5 h-[18px]">
          <path d="M5 0h9l2 8H4z" fill="#fff" stroke="#999" />
          <path d="M1 7h18v8H1z" fill="#c4c8d0" stroke="#777" />
          <path d="M4 12h12v5H4z" fill="#eeeeff" stroke="#888" />
          <path d="M5 14h9" stroke="#d8c838" strokeWidth="2" />
        </svg>
        Print
      </button>
      <button className="ml-3 flex items-center gap-1">
        <svg viewBox="0 0 20 20" className="w-5 h-5">
          <circle cx="8" cy="8" r="7.500" fill="#3a7cc4" />
          <path d="M2 5c3-5 8-5 11-2-3 3-5 1-6 5-3 1-5 0-5-3z" fill="#9cd0a4" />
          <path d="M6.5 10.500h13v9h-13z" fill="#eef4fd" stroke="#7f9fcc" />
          <path d="M6.5 10.500l6.500 5 6.500-5" fill="none" stroke="#7f9fcc" />
        </svg>
        Email
      </button>
      <button className="ml-2.5 flex items-center gap-1.5">
        <svg viewBox="0 0 18 18" className="w-[18px] h-[18px]">
          <path d="M3 1h4v4l1 2v9H0V8zM11 1h4l3 7v8h-8V7l1-2z" fill="#55565c" />
          <path d="M2 8v6M12 8v6" stroke="#a4a6ae" strokeWidth="2" />
          <rect x="7" y="6" width="4" height="4" fill="#333" />
        </svg>
        Search
      </button>
      <span className="w-2.5" />
      <Divider />
      <span className="w-[3px]" />
      <Grip />
      <button
        aria-label="Rączka"
        className="ml-0.5 w-8 h-[26px] shrink-0 flex items-center justify-center rounded border border-[#8ba0c0] bg-white"
      >
        <svg viewBox="0 0 20 20" className="w-5 h-5">
          <path
            d="M6 19L1 11c-1-2 1-3 2-1l2 2L4 4c0-2 2-2 2 0l1 5V2c0-2 2-2 2 0v7l1-7c0-2 2-2 2 0v8l2-5c1-2 3-1 2 1l-2 7-2 6z"
            fill="#f8f8f8"
            stroke="#666"
          />
        </svg>
      </button>
      <button className="ml-1.5 flex items-center">
        <svg viewBox="0 0 20 20" className="w-5 h-5">
          <path d="M0 1h5M2.500 1v17M0 18h5" stroke="#222" strokeWidth="1.3" />
          <rect x="6.5" y="3.500" width="13" height="13" fill="#c9d3e6" stroke="#8a94ac" strokeDasharray="2 1" />
          <path d="M8 5h10v3h-1l-1-1h-2v7l1 1v1h-4v-1l1-1V7h-2L9 8H8z" fill="#111" />
        </svg>
        <span className="ml-1 mr-3">Select Text</span>
        <Caret />
      </button>
      <button aria-label="Migawka" className="ml-2.5">
        <svg viewBox="0 0 20 20" className="w-5 h-5">
          <rect x="0.5" y="0.500" width="19" height="19" fill="none" stroke="#555" strokeDasharray="3 2" />
          <path d="M2 6h4l2-2h5l1 2h4v11H2z" fill="#8e8f94" />
          <circle cx="11" cy="11" r="4.500" fill="#222" />
          <circle cx="10" cy="10" r="1.500" fill="#99ccbb" />
        </svg>
      </button>
      <span className="w-1.5" />
      <Divider />
      <span className="w-0.5" />
      <Grip />
      <button aria-label="Powiększ" className="ml-2.5 flex items-center gap-2.5">
        <svg viewBox="0 0 20 20" className="w-5 h-5">
          <path d="M12 12l7 7" stroke="#d8a23c" strokeWidth="3" />
          <circle cx="7.5" cy="7" r="6" fill="#d6e8fc" stroke="#6c8fc8" strokeWidth="1.5" />
          <path d="M4 6h2.500V3.500h2V6H11v2H8.500v2.500h-2V8H4z" fill="#1c4c98" />
        </svg>
        <Caret />
      </button>
      <button aria-label="Rozmiar rzeczywisty" className="ml-3">
        <PageGlyph />
      </button>
      <button aria-label="Dopasuj stronę" className="ml-3">
        <PageGlyph framed />
      </button>
      <button
        aria-label="Dopasuj szerokość"
        className="ml-1.5 w-[31px] h-[26px] shrink-0 flex items-center justify-center rounded border border-[#8ba0c0] bg-white"
      >
        <PageGlyph framed />
      </button>
      <button aria-label="Pomniejsz" className="ml-2.5">
        <ZoomCircle />
      </button>
      <input
        aria-label="Skala"
        value={zoom}
        onChange={(e) => setZoom(e.target.value)}
        className="ml-2 w-[60px] h-[18px] bg-white text-[13px] font-['Liberation_Sans',sans-serif] outline-none"
      />
      <button aria-label="Wybierz skalę" className="ml-1.5 mr-4">
        <Caret />
      </button>
      <button aria-label="Zwiększ skalę">
        <ZoomCircle plus />
      </button>
      <span className="w-2.5" />
      <Divider />
      <span className="w-0.5" />
      <Grip />
      <button aria-label="Cofnij" className="ml-2">
        <svg viewBox="0 0 20 16" className="w-5 h-4">
          <path d="M4 8c5-6 14-5 13 1-1 3-3 4-4 5" fill="none" stroke="#b9b7ac" strokeWidth="3" />
          <path d="M0 3l2 11 9-4z" fill="#b9b7ac" />
        </svg>
      </button>
      <button aria-label="Ponów" className="ml-3">
        <svg viewBox="0 0 20 16" className="w-5 h-4 -scale-x-100">
          <path d="M4 8c5-6 14-5 13 1-1 3-3 4-4 5" fill="none" stroke="#b9b7ac" strokeWidth="3" />
          <path d="M0 3l2 11 9-4z" fill="#b9b7ac" />
        </svg>
      </button>
      <button aria-label="Kopiuj" className="ml-3">
        <svg viewBox="0 0 18 18" className="w-[18px] h-[18px]">
          <path d="M0.5 0.500h9v12h-9zM7.500 4.500h7l3 3v10h-10z" fill="#e6e4da" stroke="#a9a79b" />
          <path d="M2 4h4M2 7h4M9 9h6M9 12h6M9 15h6" stroke="#a9a79b" />
        </svg>
      </button>
      <span className="w-2" />
      <Divider />
      <span className="w-[3px]" />
      <Grip />
      <button aria-label="Obróć w prawo" className="ml-2">
        <RotateGlyph />
      </button>
      <button aria-label="Obróć w lewo" className="ml-3 mr-1.5">
        <RotateGlyph flip />
      </button>
      <Divider />
      <div className="ml-auto relative w-[141px] h-7 overflow-hidden border-2 border-[#9f9d90] bg-white">
        <svg viewBox="0 0 136 24" className="absolute inset-0 w-full h-full">
          <path d="M118 24c-2-10 2-20 10-26h8v26z" fill="#f4a4a4" />
          <path d="M84 4c14 0 24 10 26 22" fill="none" stroke="#f8d4d4" strokeWidth="4" />
        </svg>
        <a
          href="#reader"
          className="relative block text-center text-[11px] leading-[10px] pt-0.5 pr-2 font-bold text-[#3030d0] underline font-['Lato',sans-serif]"
        >
          Download New Reader
          <br />
          Now
        </a>
      </div>
    </div>
  );
}

// ---------- reader side panel ----------

function SideTab({ label, height, active = false }: { label: string; height: string; active?: boolean }) {
  return (
    <button className={`flex flex-col w-[17px] ${height}`}>
      <svg viewBox={active ? "0 0 17 21" : "0 0 17 9"} className={`w-[17px] shrink-0 ${active ? "h-[21px]" : "h-[9px]"}`}>
        <path d={active ? "M0 21L17 4v17z" : "M0 9L9 0h8v9z"} fill="#ece9d8" />
        <path d={active ? "M0 21L17 4V0" : "M0 9L9 0"} fill="none" stroke="#000" />
      </svg>
      <span
        className={`flex-1 w-full flex items-center justify-center border-l border-black bg-[#ece9d8] ${
          active ? "font-bold pb-3" : "border-r pb-1"
        }`}
      >
        <span className="[writing-mode:vertical-rl] rotate-180 leading-[15px] font-['Liberation_Sans',sans-serif]">
          {label}
        </span>
      </span>
      <span className="w-full h-1.5 shrink-0 border-b border-black bg-[#3a5fae]" />
    </button>
  );
}

function PdfIcon() {
  return (
    <svg viewBox="0 0 16 16" className="w-4 h-4 shrink-0">
      <path d="M0.5 0.500h7v11h-7z" fill="#fff" stroke="#5b74b4" />
      <path d="M4.5 2.500h7l4 4v9h-11z" fill="#eef2fb" stroke="#5b74b4" />
      <path d="M11.5 2.500v4h4" fill="none" stroke="#5b74b4" />
      <path d="M6 14c2-2 4-5 3.500-8 0 3 2 6 5.500 6-4 0-6 1-9 2z" fill="none" stroke="#d8281c" strokeWidth="1.2" />
    </svg>
  );
}

function SidePanel() {
  const bookmarks = [
    { title: "Overview", open: false },
    { title: "User Guide", open: true },
    { title: "UUSP (UPA-USB Serial Programmer)", open: true },
    { title: "Pascal Script Reference", open: true },
  ];
  return (
    <aside className="flex shrink-0 font-['Liberation_Sans',sans-serif]">
      <div className="w-5 pl-[3px] flex flex-col gap-px bg-[#cbc8bb]">
        <SideTab label="Bookmarks" height="h-[98px]" active />
        <SideTab label="Signatures" height="h-[81px]" />
        <SideTab label="Layers" height="h-[59px]" />
        <SideTab label="Pages" height="h-14" />
        <span className="flex-1 border-r border-black" />
      </div>
      <div className="w-[175px] flex flex-col bg-[#ece9d8]">
        <div className="h-[30px] flex items-center pl-[51px] pr-3 pt-0.5 text-[13px]">
          <svg viewBox="0 0 14 14" className="w-3.5 h-3.5">
            <path d="M0.5 0.500h7v13h-7z" fill="#fff" stroke="#4c6cae" />
            <path d="M2 3h4M2 5.500h4M2 8h4M2 10.500h4" stroke="#4c6cae" />
            <path d="M9 7l4-3v6z" fill="#c04848" />
          </svg>
          <button className="ml-2 flex items-center gap-2">
            Options
            <svg viewBox="0 0 8 5" className="w-2 h-[5px]">
              <path d="M0 0h8L4 5z" fill="#000" />
            </svg>
          </button>
          <button aria-label="Zamknij panel" className="ml-auto">
            <svg viewBox="0 0 8 8" className="w-2 h-2">
              <path d="M0.5 0.500l7 7M7.500 0.500l-7 7" stroke="#000" strokeWidth="1.8" />
            </svg>
          </button>
        </div>
        <div className="flex-1 ml-[7px] flex border-l border-t border-[#a9a69a] bg-white">
          <ul className="flex-1 min-w-0 overflow-hidden text-[13px]">
            {bookmarks.map((b) => (
              <li key={b.title} className="h-[23px] flex items-center pl-[7px] whitespace-nowrap">
                {b.open ? (
                  <button aria-label="Rozwiń" className="shrink-0">
                    <svg viewBox="0 0 13 9" className="w-[13px] h-[9px]">
                      <path d="M0.5 0.500h8v8h-8zM9 4.500h4" fill="#fff" stroke="#888" />
                      <path d="M2 4.500h5M4.500 2v5" stroke="#000" />
                    </svg>
                  </button>
                ) : (
                  <span className="w-[13px] shrink-0" />
                )}
                <PdfIcon />
                <a href="#bookmark" className="ml-[3px]">
                  {b.title}
                </a>
              </li>
            ))}
          </ul>
          <div className="w-[17px] flex flex-col justify-between items-center bg-[#fbfaf7] border-l border-[#eeece4]">
            <ScrollButton label="W górę" d={UP} off />
            <ScrollButton label="W dół" d={DOWN} off />
          </div>
        </div>
        <div className="h-[17px] ml-[7px] flex items-center border-l border-[#a9a69a] bg-[#f8f7f2]">
          <ScrollButton label="W lewo" d={LEFT} />
          <span className="ml-0.5 w-[65px] h-4 rounded-sm border border-[#b0c2f0] bg-[#c6d6fc] flex items-center justify-center">
            <svg viewBox="0 0 8 6" className="w-2 h-1.5">
              <path d="M0.5 0v6M2.500 0v6M4.500 0v6M6.500 0v6" stroke="#8fa8e0" />
            </svg>
          </span>
          <span className="flex-1" />
          <ScrollButton label="W prawo" d={RIGHT} />
          <span className="w-[17px] h-full border-t border-black bg-[#d0cdc2]" />
        </div>
      </div>
      <div className="w-[7px] flex flex-col border-l border-r border-black bg-[#ece9d8]">
        <span className="h-[209px]" />
        <svg viewBox="0 0 5 28" className="w-[5px] h-7">
          <rect width="5" height="28" fill="#3a5fae" />
          <path d="M2.5 2v24" stroke="#a9bde8" strokeDasharray="1 1" />
          <path d="M0 0.500h5M0 27.500h5" stroke="#000" />
        </svg>
      </div>
    </aside>
  );
}

// ---------- schematic ----------

const tagText = "fill-[#333] font-thin text-[15px] font-['Roboto',sans-serif]";
const numText = "fill-[#555] font-light text-[10px] font-['Roboto',sans-serif]";
const pinText = "fill-black text-sm";

function PinRow({ pin, side, num }: { pin: Pin; side: "left" | "right"; num: number }) {
  const { y } = pin;
  if (side === "left") {
    const x = pin.short ? 658 : 646;
    return (
      <g>
        <path d={`M${x} ${y - 8}h65l7 8-7 8h-65z`} fill="#fff" stroke="#000" strokeWidth="1.8" />
        {pin.short ? (
          <path d={`M${x + 72} ${y}H806`} stroke="#000" strokeWidth="1.8" />
        ) : (
          <path d={`M718 ${y}H738M742 ${y}h4M750 ${y}h4M758 ${y}H806`} stroke="#000" strokeWidth="1.8" />
        )}
        <text x={x + 28} y={y + 6} className={tagText}>
          {pin.tag}
        </text>
        <text x="798" y={y + 10} className={numText}>
          {num}
        </text>
        <text x="810" y={pin.base} className={pinText}>
          {pin.label}
        </text>
      </g>
    );
  }
  const tip = pin.short ? 977 : 989;
  return (
    <g>
      <path d={`M${tip} ${y}l8-8h64v16h-64z`} fill="#fff" stroke="#000" strokeWidth="1.8" />
      {pin.short ? (
        <path d={`M902 ${y}H${tip}`} stroke="#000" strokeWidth="1.8" />
      ) : (
        <path d={`M902 ${y}H953M956 ${y}h3M963 ${y}h3M969 ${y}H${tip}`} stroke="#000" strokeWidth="1.8" />
      )}
      <text x={tip + 33} y={y + 6} className={tagText}>
        {pin.tag}
      </text>
      <text x="903" y={y + 10} className={numText}>
        {num}
      </text>
      <text x="896" y={pin.base} textAnchor="end" className={pinText}>
        {pin.label}
      </text>
    </g>
  );
}

type ChipProps = { top: number; bottom: number; name: string; left: Pin[]; right: Pin[] };

function Chip({ top, bottom, name, left, right }: ChipProps) {
  return (
    <g>
      <path d={`M806 ${top}H838a16 16 0 0 0 32 0H902V${bottom}H806z`} fill="#fff" stroke="#000" strokeWidth="1.8" />
      {left.map((p, i) => (
        <PinRow key={p.tag} pin={p} side="left" num={i + 1} />
      ))}
      {right.map((p, i) => (
        <PinRow key={p.tag} pin={p} side="right" num={8 - i} />
      ))}
      <text
        x={name === "I2C" ? 858 : 854}
        y={top + 97}
        textAnchor="middle"
        className="fill-[#444] font-thin text-[22px] font-['Roboto',sans-serif]"
      >
        {name}
      </text>
    </g>
  );
}

function Schematic() {
  return (
    <svg
      viewBox="276 220 906 430"
      preserveAspectRatio="xMinYMin slice"
      className="block w-full h-[430px] bg-white font-['DejaVu_Sans_Mono',monospace]"
    >
      <path d="M457 223H607L613 234 593 271H471L451 234z" fill="none" stroke="#000" strokeWidth="1.8" />
      {[1, 2, 3, 4, 5].map((n) => (
        <g key={n}>
          <circle cx={436 + n * 32} cy="237" r="5" fill="none" stroke="#000" strokeWidth="1.8" />
          <text x={437 + n * 32 + 4} y="239" className={pinText}>
            {n}
          </text>
        </g>
      ))}
      {[6, 7, 8, 9].map((n) => (
        <g key={n}>
          <circle cx={292 + n * 32} cy="257" r="5" fill="none" stroke="#000" strokeWidth="1.8" />
          <text x={298 + n * 32} y="268" className={pinText}>
            {n}
          </text>
        </g>
      ))}
      <text x="531" y="288" textAnchor="middle" className={pinText}>
        UUSP
      </text>
      <Chip top={214} bottom={390} name="I2C" left={i2cLeft} right={i2cRight} />
      <Chip top={430} bottom={607} name="SPI" left={spiLeft} right={spiRight} />
      {/* marker line around the SPI chip */}
      <g fill="none" stroke="#fe0000" strokeWidth="8" strokeLinejoin="round">
        <path d="M582 415H615L624 413 646 410 674 403Q700 396 721 394H774Q784 394 789 396L810 403 826 404 842 410Q858 419 865 419H885L905 416 928 413H1085Q1091 413 1091 419L1092 447 1097 464 1103 482 1099 493 1096 510 1083 530V633" />
        <path d="M592 415V463L599 523 605 557Q608 574 614 583L631 605 648 622 671 630H696L717 625 749 618 764 620 810 619 842 617 1003 615H1092" />
      </g>
      <g className="text-base font-bold font-['Liberation_Sans',sans-serif]">
        <text x="361" y="659">
          3.5.2
        </text>
        <text x="424" y="659">
          Microwire
        </text>
      </g>
    </svg>
  );
}

function Document() {
  return (
    <section className="flex-1 min-w-0 flex flex-col">
      <div className="flex">
        <div className="flex-1 min-w-0 pl-1.5 pr-1 bg-[#a9a598]">
          <div className="border-l border-black border-r-[3px]">
            <Schematic />
          </div>
        </div>
        <div className="w-[17px] flex flex-col items-center bg-[#fbfaf7]">
          <button aria-label="Menu" className="w-full h-[17px] flex items-center justify-center border-r border-b border-black bg-[#ece9d8]">
            <svg viewBox="0 0 5 9" className="w-[5px] h-[9px]">
              <path d="M0 0v9l5-4.500z" fill="#000" />
            </svg>
          </button>
          <ScrollButton label="W górę" d={UP} />
          <span className="mt-14 w-3.5 h-1.5 rounded-sm border border-[#b0c2f0] bg-[#c6d6fc]" />
          <span className="flex-1" />
          <ScrollButton label="W dół" d={DOWN} />
        </div>
      </div>
      <div className="h-[17px] flex items-center bg-[#f8f7f2]">
        <button aria-label="Podziel" className="w-[17px] h-4 flex items-center justify-center border-r border-b border-[#a9a69a] bg-[#ece9d8]">
          <svg viewBox="0 0 9 8" className="w-[9px] h-2">
            <path d="M4.5 0v8" stroke="#4a6184" />
            <path d="M3 1L0 4l3 3zM6 1l3 3-3 3z" fill="#4a6184" />
          </svg>
        </button>
        <span className="w-[91px] h-full text-center leading-[17px] bg-[#ece9d8]">8,5 x 11 in</span>
        <ScrollButton label="W lewo" d={LEFT} off />
        <span className="flex-1" />
        <ScrollButton label="W prawo" d={RIGHT} off />
        <span className="w-[17px] h-full border-t border-black bg-[#d0cdc2]" />
      </div>
    </section>
  );
}

function PageNav() {
  const [page, setPage] = useState("9 of 57");
  const arrow = "w-4 h-4";
  const line = "w-0.5 h-[18px] border-l border-[#a9a69a] bg-white";
  return (
    <div className="h-[26px] flex items-center pl-[3px] pr-2.5 border-t border-black border-b border-b-[#a9a69a] bg-[#ece9d8]">
      <div className="flex-[453]">
        <svg viewBox="0 0 18 16" className="w-[18px] h-4">
          <path d="M12 0l1 4 4-2-2 4 3 2-3 2 2 4-4-1-2 3z" fill="#f28c28" />
          <path d="M3 7V4c0-4 6-4 6 0v3" fill="none" stroke="#777" strokeWidth="1.5" />
          <rect x="0.5" y="6.500" width="11" height="9" fill="#f0b83c" stroke="#a87818" />
        </svg>
      </div>
      <div className="flex items-center">
        <span className={line} />
        <button aria-label="Pierwsza strona" className="ml-2.5">
          <svg viewBox="0 0 16 16" className={arrow}>
            <path d="M1 1h3v14H1z" fill="#4a80b8" />
            <path d="M15 1v14L7 8z" fill="#7aaada" stroke="#3c70a8" />
          </svg>
        </button>
        <button aria-label="Poprzednia strona" className="ml-3">
          <svg viewBox="0 0 16 16" className={arrow}>
            <path d="M12 1v14L3 8z" fill="#6a9cd0" stroke="#3c70a8" />
          </svg>
        </button>
        <input
          aria-label="Strona"
          value={page}
          onChange={(e) => setPage(e.target.value)}
          className="ml-1.5 w-[107px] h-[18px] bg-white text-center text-[13px] font-['Liberation_Sans',sans-serif] outline-none"
        />
        <button aria-label="Następna strona" className="ml-1.5">
          <svg viewBox="0 0 16 16" className={arrow}>
            <path d="M3 1v14l9-7z" fill="#a4c8ec" stroke="#5c88bc" />
          </svg>
        </button>
        <button aria-label="Ostatnia strona" className="ml-2.5">
          <svg viewBox="0 0 16 16" className={arrow}>
            <path d="M1 1v14l8-7z" fill="#7aaada" stroke="#3c70a8" />
            <path d="M12 1h3v14h-3z" fill="#4a80b8" />
          </svg>
        </button>
        <span className={`ml-2 ${line}`} />
        <button aria-label="Poprzedni widok" className="ml-2.5">
          <svg viewBox="0 0 16 16" className={arrow}>
            <circle cx="8" cy="8" r="7.500" fill="#4f8c34" stroke="#2f5f20" />
            <path d="M3 8l5-4.500V6.500h5v3H8v3z" fill="#fff" />
          </svg>
        </button>
        <button aria-label="Następny widok" className="ml-3">
          <svg viewBox="0 0 16 16" className={arrow}>
            <circle cx="8" cy="8" r="7.500" fill="#b4b2a8" stroke="#a09e94" />
            <path d="M13 8L8 3.500V6.500H3v3h5v3z" fill="#fff" />
          </svg>
        </button>
        <span className={`ml-2 ${line}`} />
      </div>
      <div className="flex-[386] flex items-center justify-end">
        <button aria-label="Jedna strona">
          <svg viewBox="0 0 14 16" className="w-3.5 h-4">
            <rect x="0.5" y="0.500" width="13" height="15" fill="#d6e4f8" stroke="#7c9dcf" />
          </svg>
        </button>
        <button
          aria-label="Ciągły"
          className="ml-1.5 w-[27px] h-[22px] flex items-center justify-center rounded border border-[#8ba0c0] bg-white"
        >
          <svg viewBox="0 0 14 16" className="w-3.5 h-4">
            <path d="M0.5 0v6.500h13V0M0.500 16V9.500h13V16" fill="#d6e4f8" stroke="#7c9dcf" />
          </svg>
        </button>
        <button aria-label="Ciągły, dwie strony" className="ml-1.5">
          <svg viewBox="0 0 14 16" className="w-3.5 h-4">
            <path d="M0.5 0v6.500h5V0M8.500 0v6.500h5V0M0.500 16V9.500h5V16M8.500 16V9.500h5V16" fill="#d6e4f8" stroke="#7c9dcf" />
          </svg>
        </button>
        <button aria-label="Dwie strony" className="ml-3">
          <svg viewBox="0 0 16 12" className="w-4 h-3">
            <path d="M0.5 0.500h6v11h-6zM9.500 0.500h6v11h-6z" fill="#d6e4f8" stroke="#7c9dcf" />
          </svg>
        </button>
      </div>
    </div>
  );
}

// ---------- taskbar ----------

function Taskbar() {
  return (
    <footer className="h-[30px] flex items-stretch bg-gradient-to-b from-[#3f8cf3] via-[#245edc] via-20% to-[#2058d8] text-white whitespace-nowrap">
      <button className="w-[98px] flex items-center pl-2.5 rounded-r-xl bg-gradient-to-b from-[#5fae5c] via-[#3c8f3c] to-[#2f7d30]">
        <svg viewBox="0 0 20 18" className="w-5 h-[18px]">
          <path d="M3 2c2-1.500 4-1 6 0L7.500 8.500c-2-1-4-1-6 0z" fill="#e8502c" />
          <path d="M10.5 3c2 1 4 1.500 7 0L16 9c-2 1.500-5 1-7 0z" fill="#8cc83c" />
          <path d="M1.2 10c2-1.500 4-1 6 0L5.500 16c-2-1-4-1-6 0z" fill="#4c94e8" />
          <path d="M8.7 10.500c2 1 4 1.500 7 0L14 17c-2 1.500-5 1-7 0z" fill="#f4cc38" />
        </svg>
        <span className="ml-1 text-[17px] leading-5 font-bold italic font-['Open_Sans',sans-serif] [text-shadow:1px_1px_1px_#1c4c1c]">
          Start
        </span>
      </button>
      <div className="flex items-center gap-2 pl-3">
        <svg viewBox="0 0 32 30" className="w-4 h-4">
          <Gears />
        </svg>
        <OrangeIcon />
        <svg viewBox="0 0 16 16" className="w-4 h-4">
          <circle cx="8" cy="8" r="7.500" fill="#e8c430" />
          <path d="M8 8L1.500 4.300a7.500 7.500 0 0 1 13 0z" fill="#dc3c2c" />
          <path d="M8 8L1.500 4.300A7.500 7.500 0 0 0 8 15.500z" fill="#3c9c48" />
          <circle cx="8" cy="8" r="3.500" fill="#fff" />
          <circle cx="8" cy="8" r="2.600" fill="#3c78d8" />
        </svg>
        <span className="ml-1 mb-3 text-xs">»</span>
      </div>
      <button className="ml-2 mt-1 mb-0.5 w-[158px] flex items-center gap-1 pl-2 rounded-sm border border-[#5a94f4] bg-[#3c81f3]">
        <Firefox />
        gdzie na pamieci 953...
      </button>
      <button className="ml-0.5 mt-1 mb-0.5 w-[159px] flex items-center gap-1 pl-2.5 rounded-sm border border-[#163f9c] bg-[#1e52b7]">
        <Firefox />
        uuprog.pdf (Obiekt a...
      </button>
      <div className="ml-auto flex items-center gap-2 pr-5">
        <span>PL</span>
        <svg viewBox="0 0 16 12" className="w-4 h-3">
          <path d="M4 3c2-4 5 1 8-3" fill="none" stroke="#111" />
          <rect x="0.5" y="3.500" width="15" height="8" fill="#fff" stroke="#111" />
          <path d="M2 6h12M2 8.500h12" stroke="#111" strokeDasharray="1 1" />
        </svg>
      </div>
      <div className="relative w-[110px] flex items-center pl-2.5 gap-1 bg-gradient-to-b from-[#2ab4f6] via-[#1290e8] via-20% to-[#1294ec]">
        <button
          aria-label="Pokaż ukryte ikony"
          className="absolute -left-[9px] top-[7px] w-[18px] h-[18px] rounded-full border border-[#8cc8f8] bg-[#2a84e0] flex items-center justify-center"
        >
          <svg viewBox="0 0 10 10" className="w-2.5 h-2.5">
            <path d={LEFT} fill="none" stroke="#fff" strokeWidth="2" />
          </svg>
        </button>
        <svg viewBox="0 0 14 16" className="w-3.5 h-4">
          <path d="M5 1h8v7H5z" fill="#4c5c9c" stroke="#cfd6ec" />
          <path d="M1 6h8v6H1z" fill="#2c3c7c" stroke="#cfd6ec" />
          <path d="M3 14h5" stroke="#ddd" strokeWidth="2" />
        </svg>
        <OrangeIcon />
        <svg viewBox="0 0 16 16" className="w-4 h-4">
          <circle cx="8" cy="8" r="7.500" fill="#5c6c84" />
          <circle cx="5" cy="5" r="3" fill="#9cacc4" />
          <text x="6" y="12" className="text-xs font-bold fill-white">
            a
          </text>
        </svg>
        <time className="ml-0.5">23:25</time>
      </div>
    </footer>
  );
}

function App() {
  return (
    <div className="min-h-screen bg-white text-[11px] leading-[13px] text-black font-['DejaVu_Sans_Condensed','DejaVu_Sans',sans-serif]">
      <main className="w-[52.3%] bg-[#004e98] overflow-hidden">
        <div className="flex pb-[19px]">
          {/* left desktop icons */}
          <ul className="w-16 shrink-0 overflow-hidden pt-0.5">
            {leftIcons.map((item) => (
              <li
                key={item.lines.join(" ")}
                className="w-[74px] h-[82px] last:h-auto flex flex-col items-center gap-[5px]"
              >
                <svg viewBox="0 0 32 32" className="w-8 h-8 shrink-0">
                  {item.icon}
                </svg>
                <DesktopLabel>
                  {item.lines.map((line) => (
                    <span key={line} className="block">
                      {line}
                    </span>
                  ))}
                </DesktopLabel>
              </li>
            ))}
          </ul>

          {/* browser window */}
          <div className="relative z-10 flex-1 min-w-0 self-start bg-[#f0eee2] border-x-[3px] border-b-4 border-[#0b32c4]">
            <TitleBar />
            <MenuBar />
            <NavBar />
            <BookmarksBar />
            <WinampBar />
            <DaemonBar />
            <TabBar />
            <ReaderToolbar />
            <div className="flex">
              <SidePanel />
              <Document />
            </div>
            <PageNav />
            <div className="h-[22px] flex items-center justify-between pl-1.5">
              <span>Zatrzymano</span>
              <span className="h-[18px] pl-1.5 flex items-end border-l border-[#c4c1b2]">
                <svg viewBox="0 0 12 12" className="w-3 h-3">
                  <path d="M8 2h2v2H8zM4 6h2v2H4zM8 6h2v2H8zM0 10h2v2H0zM4 10h2v2H4zM8 10h2v2H8z" fill="#b9b6a4" />
                </svg>
              </span>
            </div>
          </div>

          {/* right desktop icons */}
          <div className="relative w-[168px] shrink-0 -ml-[11px] pt-0.5">
            <ul className="grid grid-cols-[75px_75px] auto-rows-[82px]">
              {files.map((f) => (
                <li key={f.name} className={`flex flex-col items-center gap-1 ${f.place}`}>
                  {f.image ? <ImageFileIcon /> : <FileIcon />}
                  <DesktopLabel>{f.name}</DesktopLabel>
                </li>
              ))}
            </ul>
            <svg viewBox="0 0 40 40" className="absolute left-[75px] top-[49px] w-10 h-10">
              <rect x="0.5" y="0.500" width="39" height="39" fill="#9cc4ec" stroke="#0c2c54" />
              <rect x="4.5" y="4.500" width="31" height="31" fill="#3c7cbc" stroke="#143c6c" />
              <path d="M5 5h30v14Q20 14 5 22z" fill="#5c98d0" />
              <path d="M16 13h8v8h5l-9 8-9-8h5z" fill="#a4c4e8" />
            </svg>
            <svg viewBox="0 0 46 46" className="absolute left-[99px] top-[124px] w-[46px] h-[46px]">
              <rect x="1" y="1" width="44" height="44" rx="3" fill="#0c4ca4" stroke="#082c5c" strokeWidth="2" />
              <rect x="3" y="3" width="40" height="40" rx="3" fill="none" stroke="#5c98e0" strokeWidth="2" />
              <path d="M5 5h36v14Q23 14 5 24z" fill="#2c6cc4" />
              <path d="M12 9h22l-7 7h5l-6 7h8L23 38 12 27h8l-7-8h6z" fill="#b4ccec" />
            </svg>
          </div>
        </div>
        <Taskbar />
      </main>
    </div>
  );
}

export default App;
